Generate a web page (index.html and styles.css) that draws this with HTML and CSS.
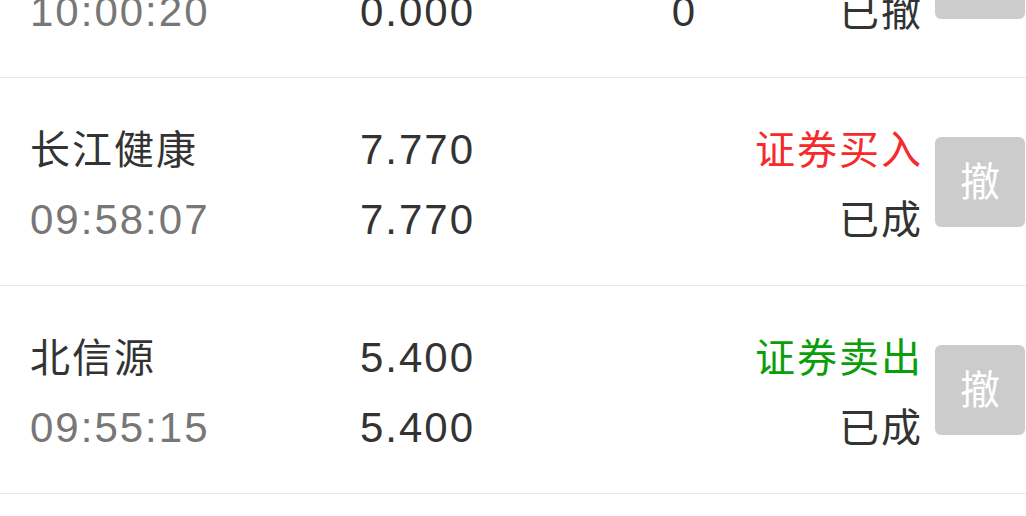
FILE: index.html
```html
<!DOCTYPE html>
<html lang="zh-CN">
<head>
  <meta charset="UTF-8" />
  <meta name="viewport" content="width=device-width, initial-scale=1" />
  <title>当日委托</title>
  <link rel="stylesheet" href="styles.css">
</head>
<body>
  <div class="orders">
    <div class="order">
      <div class="cols">
        <div class="name">兴蓉环境</div>
        <div class="price">0.000</div>
        <div class="qty"></div>
        <div class="status buy">证券买入</div>
        <div class="time">10:00:20</div>
        <div class="price">0.000</div>
        <div class="qty">0</div>
        <div class="status">已撤</div>
      </div>
      <button class="cancel">撤</button>
    </div>

    <div class="order">
      <div class="cols">
        <div class="name">长江健康</div>
        <div class="price">7.770</div>
        <div class="qty"></div>
        <div class="status buy">证券买入</div>
        <div class="time">09:58:07</div>
        <div class="price">7.770</div>
        <div class="qty"></div>
        <div class="status">已成</div>
      </div>
      <button class="cancel">撤</button>
    </div>

    <div class="order">
      <div class="cols">
        <div class="name">北信源</div>
        <div class="price">5.400</div>
        <div class="qty"></div>
        <div class="status sell">证券卖出</div>
        <div class="time">09:55:15</div>
        <div class="price">5.400</div>
        <div class="qty"></div>
        <div class="status">已成</div>
      </div>
      <button class="cancel">撤</button>
    </div>
  </div>
</body>
</html>
```

FILE: styles.css
```css
body {
  margin: 0;
  background: #fff;
  color: #333;
  font-family: "Liberation Sans", "Noto Sans CJK SC", sans-serif;
  overflow: hidden;
}

.orders {
  margin-top: -130px;
}

.order {
  display: flex;
  align-items: center;
  height: 207px;
  padding: 0 1px 0 30px;
  border-bottom: 1px solid #e8e8e8;
}

/* name | price | qty | status, two lines per order */
.cols {
  flex: 1;
  display: grid;
  grid-template-columns: 1fr 200px 222px 226px;
  grid-auto-rows: 70px;
  padding-top: 6px;
  font-size: 40px;
  line-height: 70px;
  letter-spacing: 2px;
  white-space: nowrap;
}

.time,
.price,
.qty {
  font-size: 42px;
}

.price,
.qty,
.status {
  text-align: right;
  margin-right: -2px;
}

.time {
  color: #777;
}

.status.buy {
  color: #f52a2a;
}

.status.sell {
  color: #0a9e0a;
}

.cancel {
  width: 90px;
  height: 90px;
  margin-left: 14px;
  border: none;
  border-radius: 6px;
  background: #ccc;
  color: #fff;
  font-family: "Noto Sans CJK SC", sans-serif;
  font-size: 40px;
  line-height: 1;
  padding: 0 0 6px;
}
```
